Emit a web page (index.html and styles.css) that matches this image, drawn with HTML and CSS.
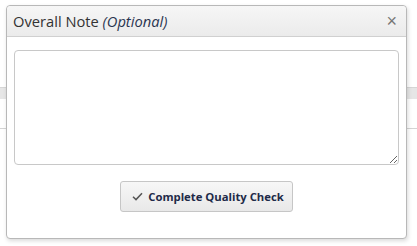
FILE: index.html
```html
<!DOCTYPE html>
<html lang="en">
<head>
  <meta charset="UTF-8" />
  <title>Overall Note</title>
  <link rel="stylesheet" href="styles.css">
</head>
<body>

<div class="page">
  <div class="page-bar"></div>
  <div class="page-row"></div>
</div>

<div class="dialog">
  <div class="dialog-header">
    <span class="dialog-title">Overall Note <em>(Optional)</em></span>
    <button class="dialog-close" title="Close">&times;</button>
  </div>
  <div class="dialog-body">
    <textarea class="note"></textarea>
    <div class="actions">
      <button class="btn-complete">
        <svg width="11" height="9" viewBox="0 0 11 9"><path d="M1 4.8 L4 7.6 L10 1.2" fill="none" stroke="#555" stroke-width="1.5"/></svg>
        Complete Quality Check
      </button>
    </div>
  </div>
</div>

</body>
</html>
```

FILE: styles.css
```css
body {
    margin: 0;
    background-color: #ffffff;
    font-family: "Open Sans", Arial, sans-serif;
    width: 417px;
    height: 246px;
    overflow: hidden;
}

.page {
    padding-top: 87px;
}

.page-bar {
    height: 11px;
    background-color: #e6e6e6;
    border-top: 1px solid #d6d6d6;
}

.page-row {
    height: 29px;
    border-bottom: 1px solid #d4d4d4;
}

.dialog {
    position: absolute;
    left: 6px;
    top: 5px;
    width: 399px;
    height: 232px;
    background-color: #fff;
    border: 1px solid #b8b8b8;
    border-radius: 4px;
    box-shadow: 1px 2px 4px rgba(0, 0, 0, 0.15);
}

.dialog-header {
    display: flex;
    align-items: center;
    justify-content: space-between;
    height: 30px;
    padding: 0 9px 0 6px;
    background: linear-gradient(#f6f6f6, #ebebeb);
    border-bottom: 1px solid #d0d0d0;
    border-radius: 4px 4px 0 0;
}

.dialog-title {
    font-size: 14.7px;
    color: #333;
}

.dialog-title em {
    color: #2a3550;
}

.dialog-close {
    border: none;
    background: none;
    padding: 0;
    font-size: 18px;
    line-height: 18px;
    color: #777;
    cursor: pointer;
}

.dialog-body {
    padding: 13px 7px 0 7px;
}

.note {
    display: block;
    box-sizing: border-box;
    width: 100%;
    height: 115px;
    margin: 0;
    border: 1px solid #c8c8c8;
    border-radius: 4px;
    resize: vertical;
}

.actions {
    display: flex;
    justify-content: center;
    padding-top: 16px;
}

.btn-complete {
    display: flex;
    align-items: center;
    gap: 5px;
    height: 31px;
    padding: 0 8px 0 11px;
    font-family: "Open Sans", Arial, sans-serif;
    font-size: 11.3px;
    font-weight: bold;
    color: #1e2a48;
    background: linear-gradient(#f7f7f7, #e8e8e8);
    border: 1px solid #c6c6c6;
    border-radius: 3px;
    cursor: pointer;
}
```
